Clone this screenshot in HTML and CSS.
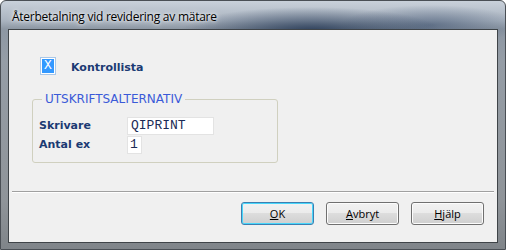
FILE: index.html
```html
<!DOCTYPE html>
<html>
<head>
<meta charset="utf-8">
<link rel="stylesheet" href="styles.css">
</head>
<body>
<div class="window">
  <div class="titlebar">
    <span class="title">Återbetalning vid revidering av mätare</span>
  </div>
  <div class="client">
    <div class="content">
      <div class="check-row">
        <span class="checkbox"><span class="check-sel">X</span></span>
        <span class="check-label">Kontrollista</span>
      </div>
      <fieldset class="group">
        <legend class="legend">UTSKRIFTSALTERNATIV</legend>
        <div class="form-grid">
          <label class="lbl">Skrivare</label>
          <span class="field field-wide">QIPRINT</span>
          <label class="lbl">Antal ex</label>
          <span class="field field-narrow">1</span>
        </div>
      </fieldset>
    </div>
    <div class="separator"></div>
    <div class="buttons">
      <button class="btn btn-default"><u>O</u>K</button>
      <button class="btn"><u>A</u>vbryt</button>
      <button class="btn"><u>H</u>jälp</button>
    </div>
  </div>
</div>
</body>
</html>
```
FILE: styles.css
```css
* { box-sizing: border-box; }
html, body { margin: 0; padding: 0; }
body { width: 506px; height: 250px; overflow: hidden; background: #ffffff; }

.window {
  width: 506px;
  height: 250px;
  border: 1px solid #4a4f55;
  border-radius: 6px 6px 0 0;
  display: flex;
  flex-direction: column;
  padding: 0 7px 6px 7px;
  background:
    radial-gradient(ellipse 130px 24px at 310px 30px, rgba(30,50,80,0.85), rgba(30,50,80,0) 100%),
    radial-gradient(ellipse 90px 20px at 430px 24px, rgba(60,80,110,0.6), rgba(60,80,110,0) 100%),
    linear-gradient(to bottom, #c9d1da 0px, #a9b3bf 20px, #8d97a3 28px, #959da6 60px, #8f9499 200px, #7f8489 249px);
}

.titlebar {
  height: 28px;
  display: flex;
  align-items: center;
  padding-left: 4px;
  padding-top: 2px;
}
.title {
  font-family: "Open Sans", "DejaVu Sans", sans-serif;
  font-size: 12px;
  color: #000000;
  text-shadow: 0 0 6px rgba(255,255,255,0.9), 0 0 3px rgba(255,255,255,0.9);
  letter-spacing: -0.25px;
}

.client {
  flex: 1;
  background: #f0f0f0;
  border: 1px solid #3f4448;
  display: flex;
  flex-direction: column;
}

.content {
  flex: 1;
  padding: 27px 0 0 23px;
}

.check-row {
  display: flex;
  align-items: center;
  height: 18px;
  margin-left: 8px;
}
.checkbox {
  width: 16px;
  height: 18px;
  border: 1px solid #a9c7e8;
  background: #ffffff;
  padding: 1px;
  display: flex;
}
.check-sel {
  flex: 1;
  background: #3399ff;
  color: #ffffff;
  font-family: "Liberation Mono", monospace;
  font-size: 13px;
  line-height: 14px;
  text-align: center;
}
.check-label {
  margin-left: 15px;
  margin-top: 3px;
  font-family: "DejaVu Sans", Verdana, sans-serif;
  font-weight: bold;
  font-size: 11px;
  color: #1b3a73;
}

.group {
  margin: 18px 0 0 0;
  width: 246px;
  height: 70px;
  border: 1px solid #d0d0bf;
  border-radius: 3px;
  padding: 0 0 0 6px;
}
.legend {
  font-family: "DejaVu Sans", Verdana, sans-serif;
  font-size: 12px;
  color: #3a5ad8;
  padding: 0 3px;
  margin-left: 3px;
  line-height: 13px;
}

.form-grid {
  display: grid;
  grid-template-columns: 88px auto;
  grid-auto-rows: 18px;
  row-gap: 1px;
  align-items: center;
  margin-top: 11px;
}
.lbl {
  font-family: "DejaVu Sans", Verdana, sans-serif;
  font-weight: bold;
  font-size: 11px;
  line-height: 14px;
  color: #1b3a73;
}
.field {
  height: 18px;
  background: #ffffff;
  border: 1px solid #e3e3e3;
  font-family: "Liberation Mono", "Courier New", monospace;
  font-size: 13px;
  line-height: 16px;
  color: #1b2a55;
  padding-left: 3px;
  justify-self: start;
}
.field-wide { width: 87px; }
.field-narrow { width: 15px; padding-left: 2px; }

.separator {
  margin: 0 3px 0 3px;
  background: #a0a0a0;
  border-bottom: 1px solid #ffffff;
  height: 2px;
}

.buttons {
  display: flex;
  justify-content: flex-end;
  gap: 12px;
  padding: 9px 13px 17px 0;
}
.btn {
  width: 73px;
  height: 23px;
  border: 1px solid #707070;
  border-radius: 3px;
  background: linear-gradient(to bottom, #f2f2f2 0%, #ebebeb 49%, #dddddd 50%, #cfcfcf 100%);
  box-shadow: inset 0 0 0 1px #fcfcfc;
  font-family: "Open Sans", "DejaVu Sans", sans-serif;
  font-size: 11px;
  color: #000000;
  padding: 0;
}
.btn-default {
  border-color: #3c7fb1;
  box-shadow: inset 0 0 0 1px #48d6fb;
}
```
